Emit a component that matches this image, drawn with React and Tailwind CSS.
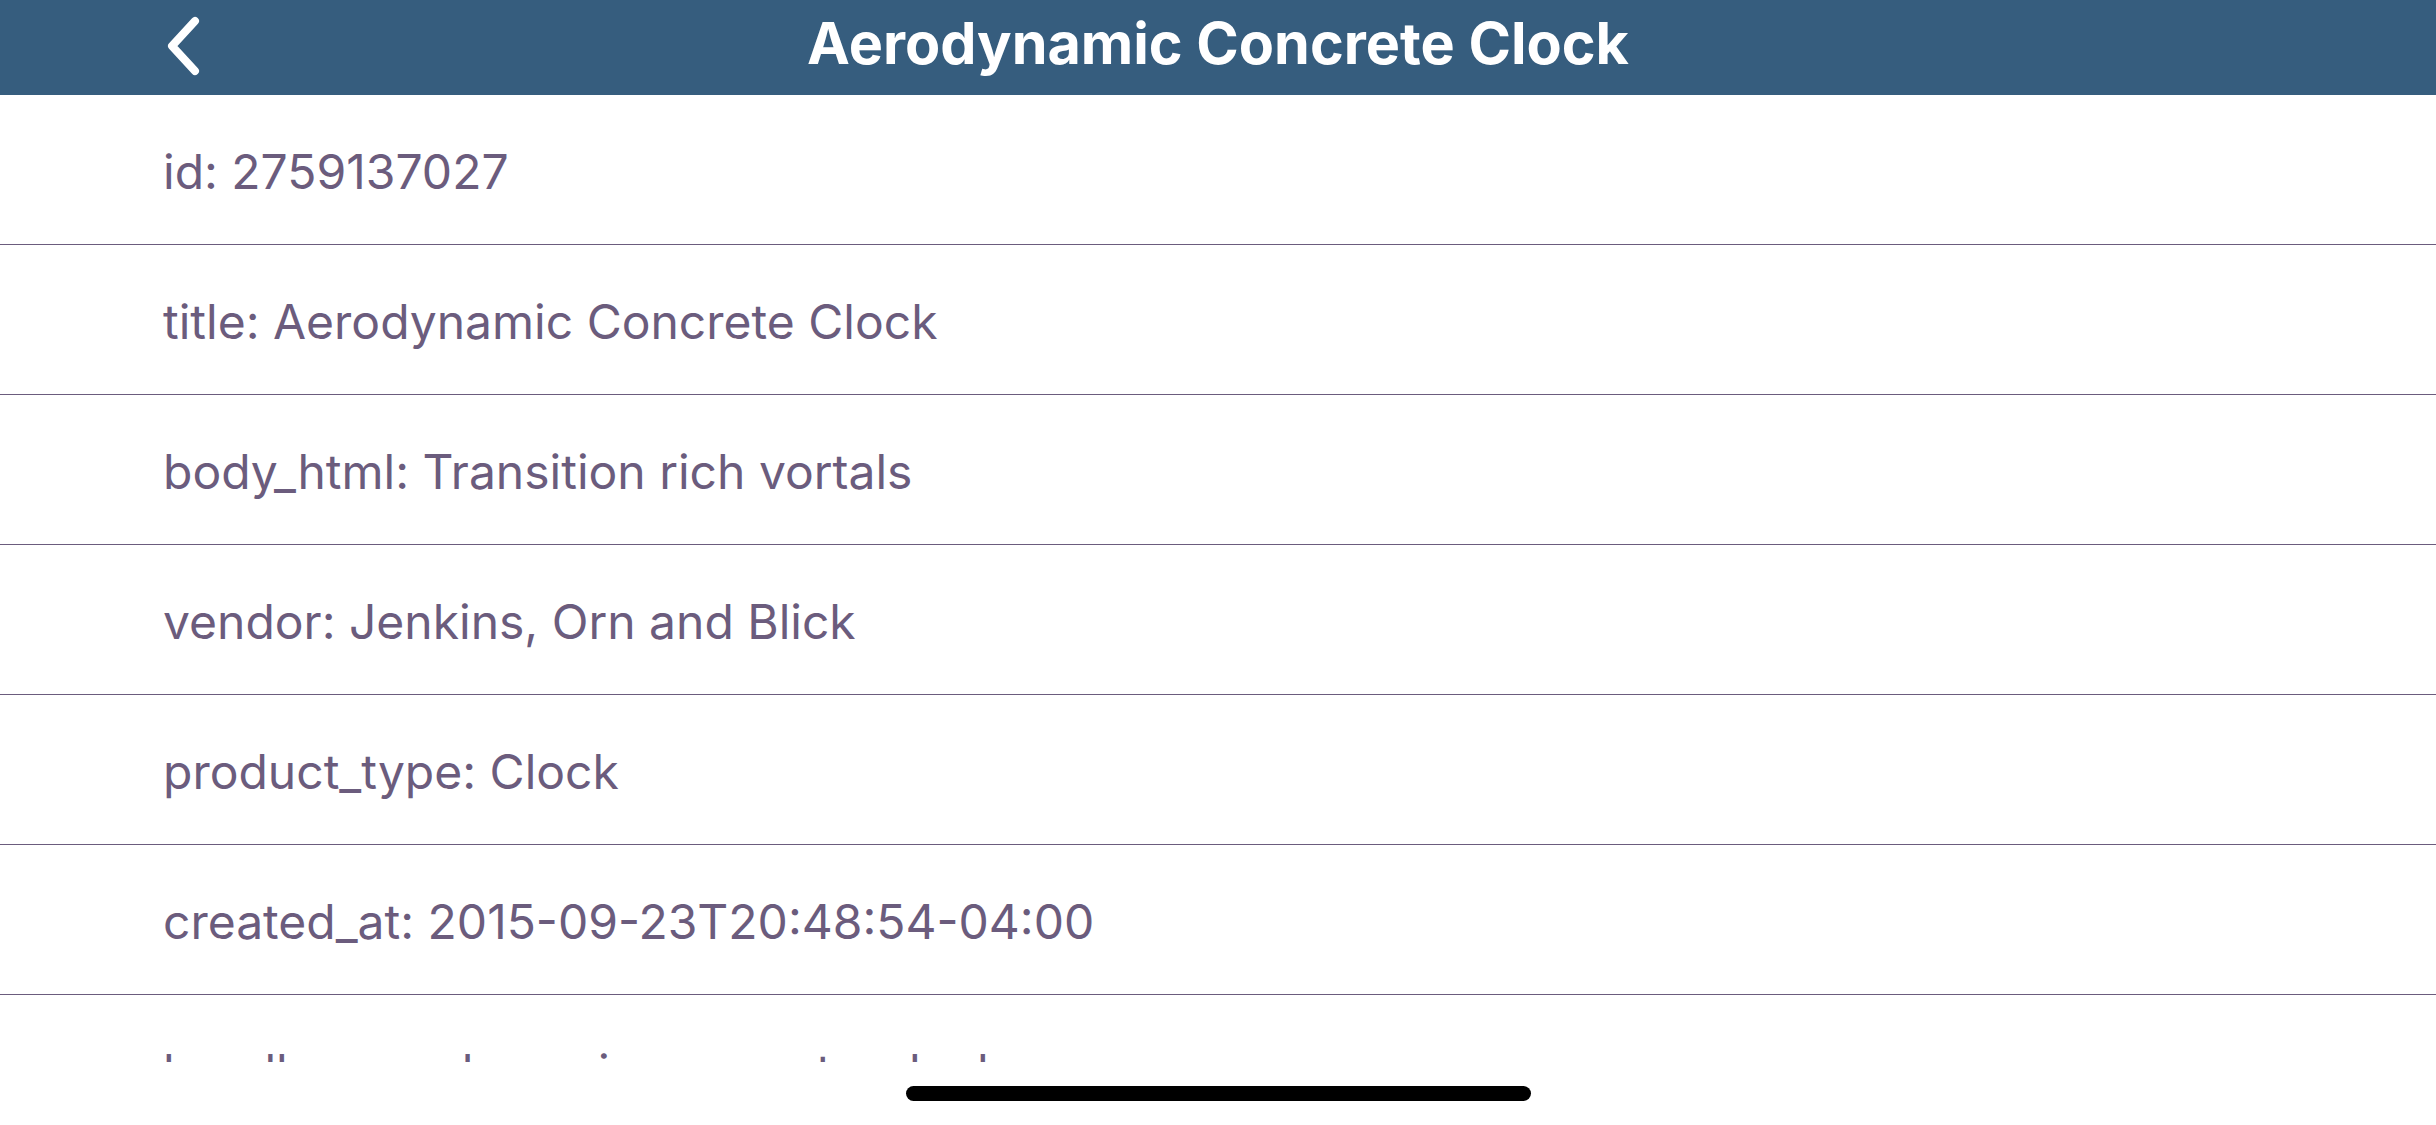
import React from 'react';

const fields = [
  { key: 'id', value: '2759137027' },
  { key: 'title', value: 'Aerodynamic Concrete Clock' },
  { key: 'body_html', value: 'Transition rich vortals' },
  { key: 'vendor', value: 'Jenkins, Orn and Blick' },
  { key: 'product_type', value: 'Clock' },
  { key: 'created_at', value: '2015-09-23T20:48:54-04:00' },
  { key: 'handle', value: 'aerodynamic-concrete-clock' },
];

const BackIcon = () => (
  <svg width="44" height="60" viewBox="0 0 44 60" fill="none">
    <path d="M35 5 L12 30 L35 55" stroke="white" strokeWidth="8" strokeLinecap="round" strokeLinejoin="round" />
  </svg>
);

const App = () => {
  return (
    <div className="w-[2436px] h-[1125px] bg-white flex flex-col overflow-hidden font-['Inter','Roboto',sans-serif]">
      <div className="h-[95px] shrink-0 bg-[#365d7e] grid grid-cols-[1fr_auto_1fr] items-center">
        <div className="pl-[160px] flex items-center pb-[3px]">
          <BackIcon />
        </div>
        <h1 className="text-white font-bold text-[57.5px] leading-none pb-[8px]">Aerodynamic Concrete Clock</h1>
        <div />
      </div>

      <div className="h-[967px] shrink-0 overflow-hidden">
        {fields.map((field) => (
          <div
            key={field.key}
            className="h-[150px] border-b border-[#6b5c7d] flex items-center px-[163px] pt-[4px]"
          >
            <span className="text-[#6b5c7d] text-[48px] leading-none">
              {field.key}: {field.value}
            </span>
          </div>
        ))}
      </div>

      <div className="flex-1 flex justify-center pt-[24px]">
        <div className="w-[625px] h-[15px] rounded-full bg-black" />
      </div>
    </div>
  );
};

export default App;
